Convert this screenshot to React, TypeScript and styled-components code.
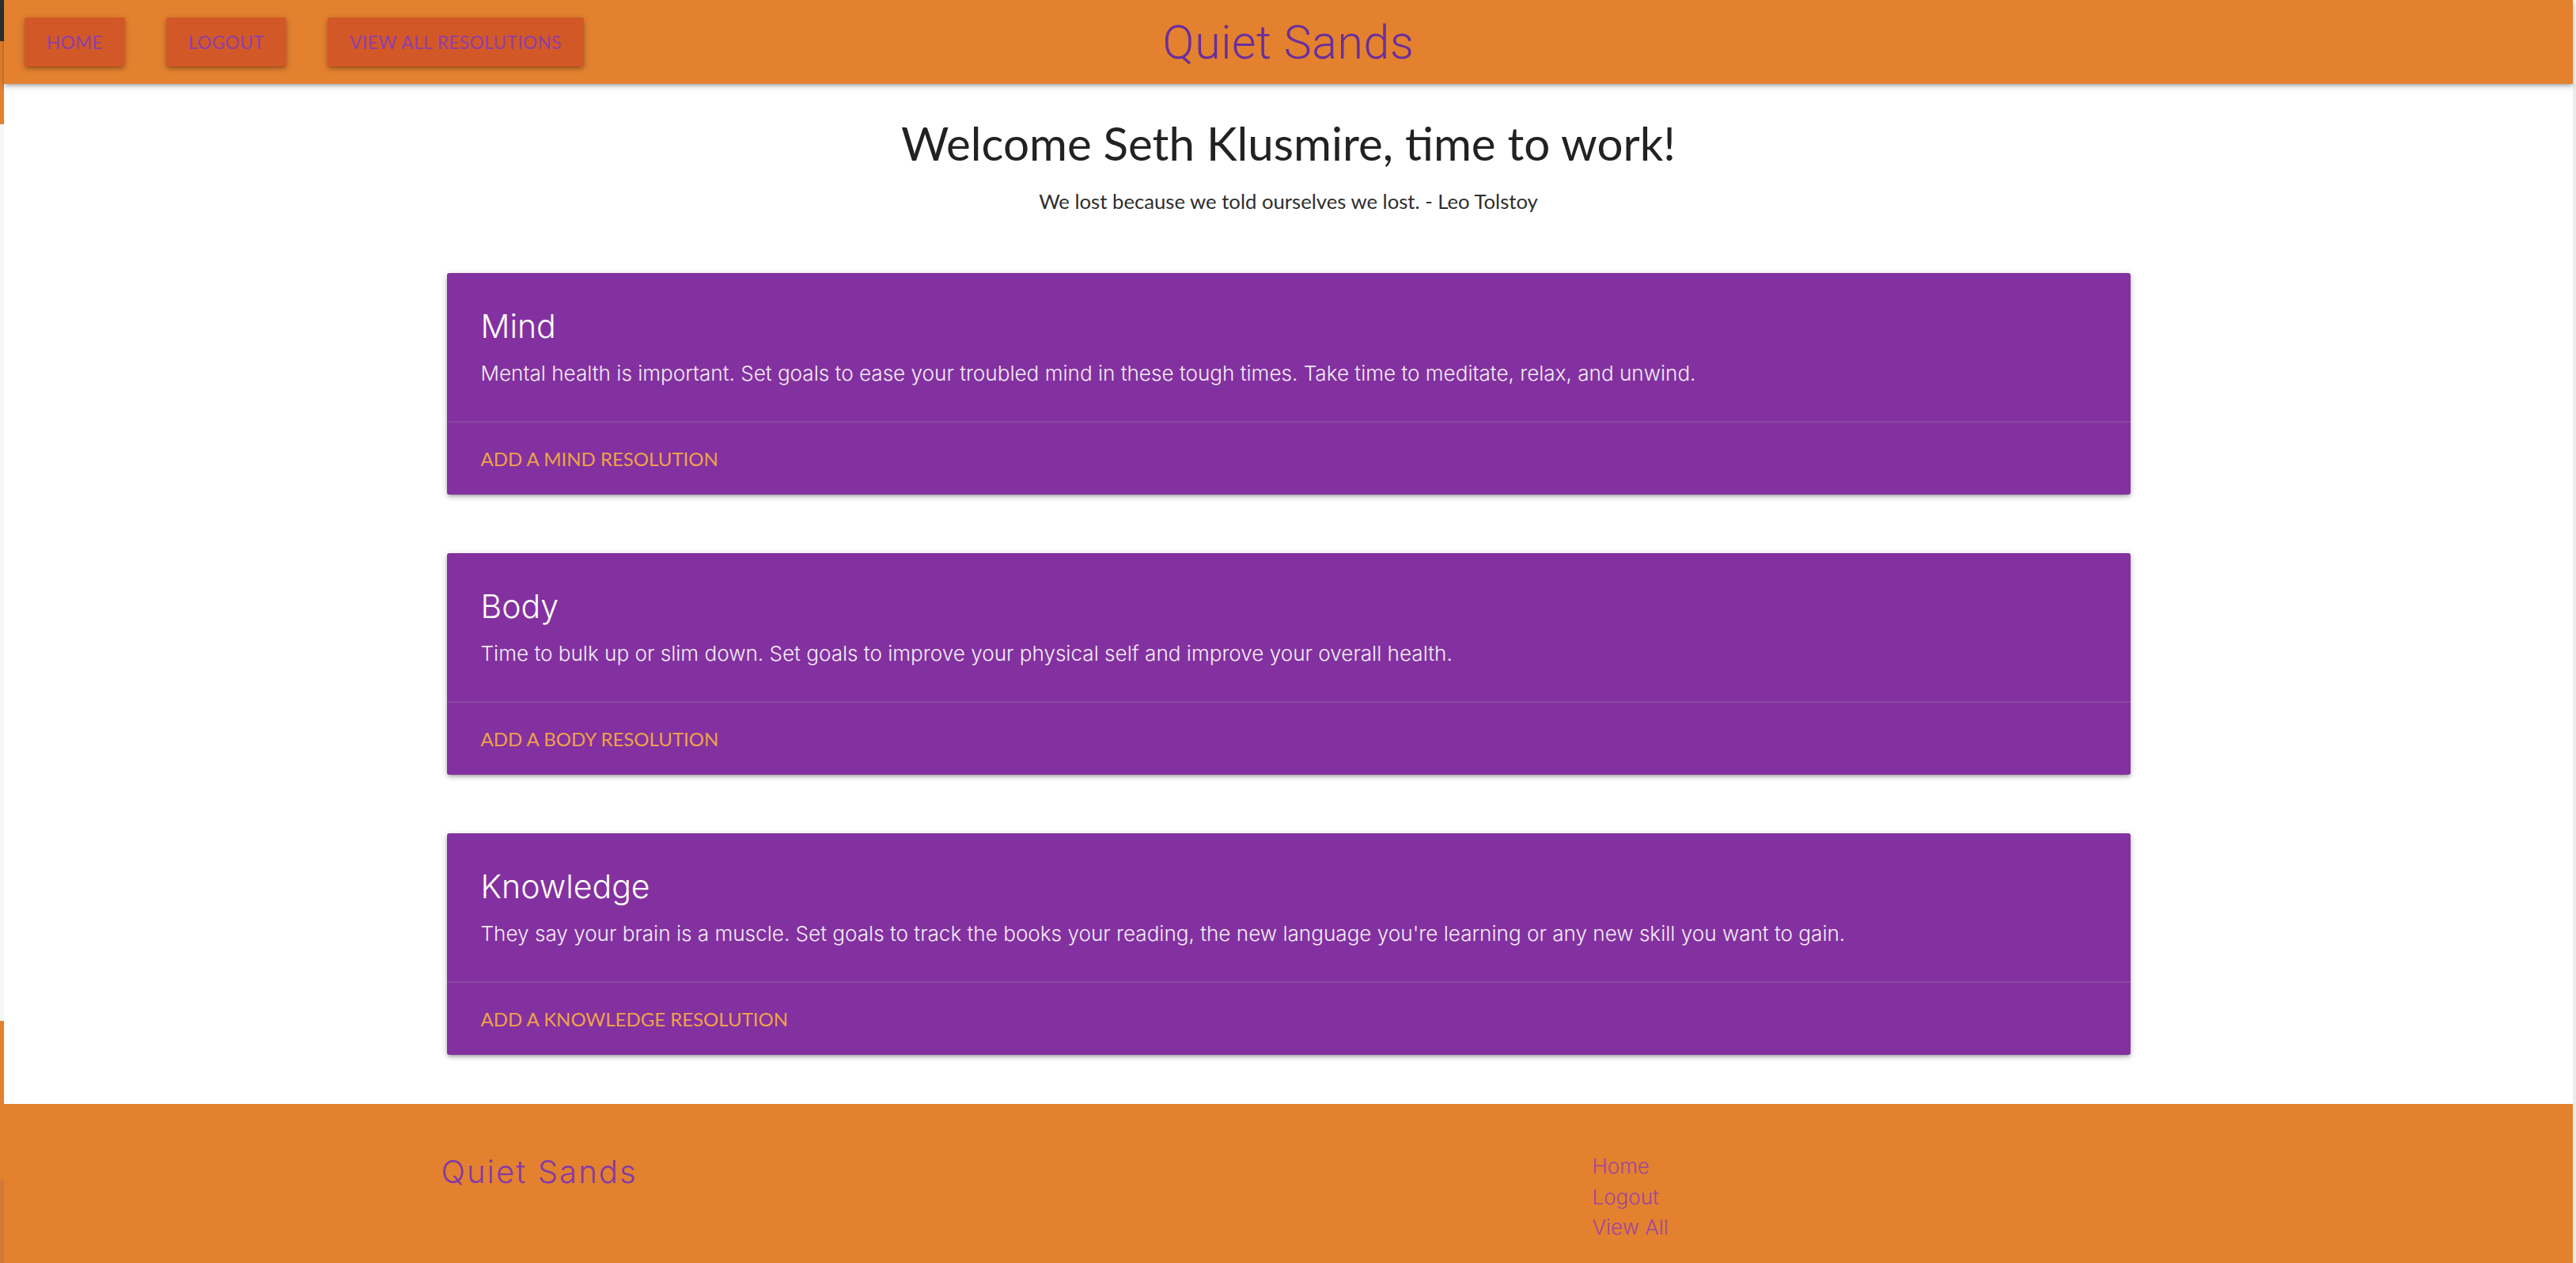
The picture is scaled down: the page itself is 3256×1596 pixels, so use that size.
import React from "react";
import styled, { createGlobalStyle } from "styled-components";

const GlobalStyle = createGlobalStyle`
  html, body { margin: 0; padding: 0; background: #ffffff; }
  * { box-sizing: border-box; }
`;

const ORANGE = "#e3812f";
const PURPLE = "#8331a0";

const Shell = styled.div`
  display: flex;
  width: 3256px;
  min-height: 1596px;
  overflow: hidden;
`;

const EdgeStrip = styled.div<{ $w: number }>`
  width: ${(p) => p.$w}px;
  flex: 0 0 ${(p) => p.$w}px;
  display: flex;
  flex-direction: column;
`;

const EdgeSeg = styled.div<{ $h?: number; $c: string }>`
  background: ${(p) => p.$c};
  ${(p) => (p.$h ? `height: ${p.$h}px; flex: 0 0 ${p.$h}px;` : "flex: 1;")}
`;

const Page = styled.div`
  flex: 1;
  display: flex;
  flex-direction: column;
  background: #ffffff;
  min-width: 0;
`;

const Header = styled.header`
  height: 106px;
  background: ${ORANGE};
  display: grid;
  grid-template-columns: 1fr auto 1fr;
  align-items: center;
  padding: 0 26px;
  box-shadow: 0 3px 4px 0 rgba(0, 0, 0, 0.14), 0 5px 2px -4px rgba(0, 0, 0, 0.12),
    0 2px 9px 0 rgba(0, 0, 0, 0.2);
  position: relative;
  z-index: 2;
`;

const NavButtons = styled.nav`
  display: flex;
  gap: 52px;
  align-items: center;
`;

const NavButton = styled.a`
  height: 62px;
  padding: 0 28px;
  display: inline-flex;
  align-items: center;
  background: #d35827;
  color: #8e3fa6;
  font-family: Lato, "Liberation Sans", sans-serif;
  font-size: 22.5px;
  letter-spacing: 0.5px;
  text-transform: uppercase;
  text-decoration: none;
  border-radius: 3px;
  box-shadow: 0 3px 4px 0 rgba(0, 0, 0, 0.14), 0 5px 2px -4px rgba(0, 0, 0, 0.12),
    0 2px 9px 0 rgba(0, 0, 0, 0.2);
`;

const Brand = styled.div`
  font-family: Roboto, "Liberation Sans", sans-serif;
  font-weight: 300;
  font-size: 59px;
  letter-spacing: 0.6px;
  color: #6a2e9d;
  line-height: 1;
  white-space: nowrap;
`;

const Main = styled.main`
  display: flex;
  flex-direction: column;
  align-items: center;
  padding-top: 34px;
  padding-bottom: 62px;
`;

const Welcome = styled.h1`
  margin: 0;
  font-family: Lato, "Liberation Sans", sans-serif;
  font-weight: 400;
  font-size: 58.3px;
  line-height: 80px;
  color: #222222;
`;

const Quote = styled.p`
  margin: 16px 0 73px;
  font-family: Lato, "Liberation Sans", sans-serif;
  font-size: 25.7px;
  line-height: 36px;
  color: #2e2e2e;
`;

const CardList = styled.div`
  width: 2128px;
  display: flex;
  flex-direction: column;
  gap: 74px;
`;

const Card = styled.section`
  background: ${PURPLE};
  border-radius: 3px;
  box-shadow: 0 3px 4px 0 rgba(0, 0, 0, 0.14), 0 5px 2px -4px rgba(0, 0, 0, 0.12),
    0 2px 9px 0 rgba(0, 0, 0, 0.2);
  height: 280px;
  display: flex;
  flex-direction: column;
`;

const CardContent = styled.div`
  height: 187px;
  padding: 42px 43px 0;
`;

const CardTitle = styled.h2`
  margin: 0;
  font-family: Inter, "Liberation Sans", sans-serif;
  font-weight: 300;
  font-size: 41px;
  line-height: 50px;
  color: #ffffff;
`;

const CardText = styled.p`
  margin: 15px 0 0;
  font-family: Inter, "Liberation Sans", sans-serif;
  font-weight: 300;
  font-size: 26.1px;
  line-height: 40px;
  color: #f3ecf6;
`;

const CardAction = styled.div`
  flex: 1;
  border-top: 2px solid rgba(160, 160, 160, 0.2);
  padding: 0 43px;
  display: flex;
  align-items: center;
`;

const ActionLink = styled.a`
  font-family: Lato, "Liberation Sans", sans-serif;
  font-size: 24px;
  text-transform: uppercase;
  color: #efa14a;
  text-decoration: none;
`;

const Footer = styled.footer`
  flex: 1;
  background: ${ORANGE};
  min-height: 201px;
`;

const FooterInner = styled.div`
  width: 2136px;
  margin: 0 auto;
  display: grid;
  grid-template-columns: 1452px 1fr;
  padding-top: 58px;
`;

const FooterBrand = styled.h5`
  margin: 0 0 0 -3px;
  font-family: Inter, "Liberation Sans", sans-serif;
  font-weight: 300;
  font-size: 40px;
  letter-spacing: 2.1px;
  line-height: 56px;
  color: #8439a6;
`;

const FooterLinks = styled.ul`
  list-style: none;
  margin: 2px 0 0;
  padding: 0;
  display: flex;
  flex-direction: column;
`;

const FooterLink = styled.a`
  display: block;
  font-family: Inter, "Liberation Sans", sans-serif;
  font-weight: 300;
  font-size: 26px;
  line-height: 38.5px;
  color: #a1479a;
  text-decoration: none;
`;

const categories = [
  {
    title: "Mind",
    text: "Mental health is important. Set goals to ease your troubled mind in these tough times. Take time to meditate, relax, and unwind.",
    action: "Add a Mind Resolution",
  },
  {
    title: "Body",
    text: "Time to bulk up or slim down. Set goals to improve your physical self and improve your overall health.",
    action: "Add a Body Resolution",
  },
  {
    title: "Knowledge",
    text: "They say your brain is a muscle. Set goals to track the books your reading, the new language you're learning or any new skill you want to gain.",
    action: "Add a Knowledge Resolution",
  },
];

export default function App() {
  return (
    <>
      <GlobalStyle />
      <Shell>
        <EdgeStrip $w={5}>
          <EdgeSeg $h={52} $c="#2d3139" />
          <EdgeSeg $h={105} $c={ORANGE} />
          <EdgeSeg $h={1133} $c="#f7f7f7" />
          <EdgeSeg $h={200} $c={ORANGE} />
          <EdgeSeg $c="#d17b35" />
        </EdgeStrip>
        <Page>
          <Header>
            <NavButtons>
              <NavButton href="#">Home</NavButton>
              <NavButton href="#">Logout</NavButton>
              <NavButton href="#">View All Resolutions</NavButton>
            </NavButtons>
            <Brand>Quiet Sands</Brand>
            <div />
          </Header>
          <Main>
            <Welcome>Welcome Seth Klusmire, time to work!</Welcome>
            <Quote>We lost because we told ourselves we lost. - Leo Tolstoy</Quote>
            <CardList>
              {categories.map((c) => (
                <Card key={c.title}>
                  <CardContent>
                    <CardTitle>{c.title}</CardTitle>
                    <CardText>{c.text}</CardText>
                  </CardContent>
                  <CardAction>
                    <ActionLink href="#">{c.action}</ActionLink>
                  </CardAction>
                </Card>
              ))}
            </CardList>
          </Main>
          <Footer>
            <FooterInner>
              <FooterBrand>Quiet Sands</FooterBrand>
              <FooterLinks>
                <li><FooterLink href="#">Home</FooterLink></li>
                <li><FooterLink href="#">Logout</FooterLink></li>
                <li><FooterLink href="#">View All</FooterLink></li>
              </FooterLinks>
            </FooterInner>
          </Footer>
        </Page>
        <EdgeStrip $w={4}>
          <EdgeSeg $h={106} $c="#fafafa" />
          <EdgeSeg $c="#ececec" />
        </EdgeStrip>
      </Shell>
    </>
  );
}
